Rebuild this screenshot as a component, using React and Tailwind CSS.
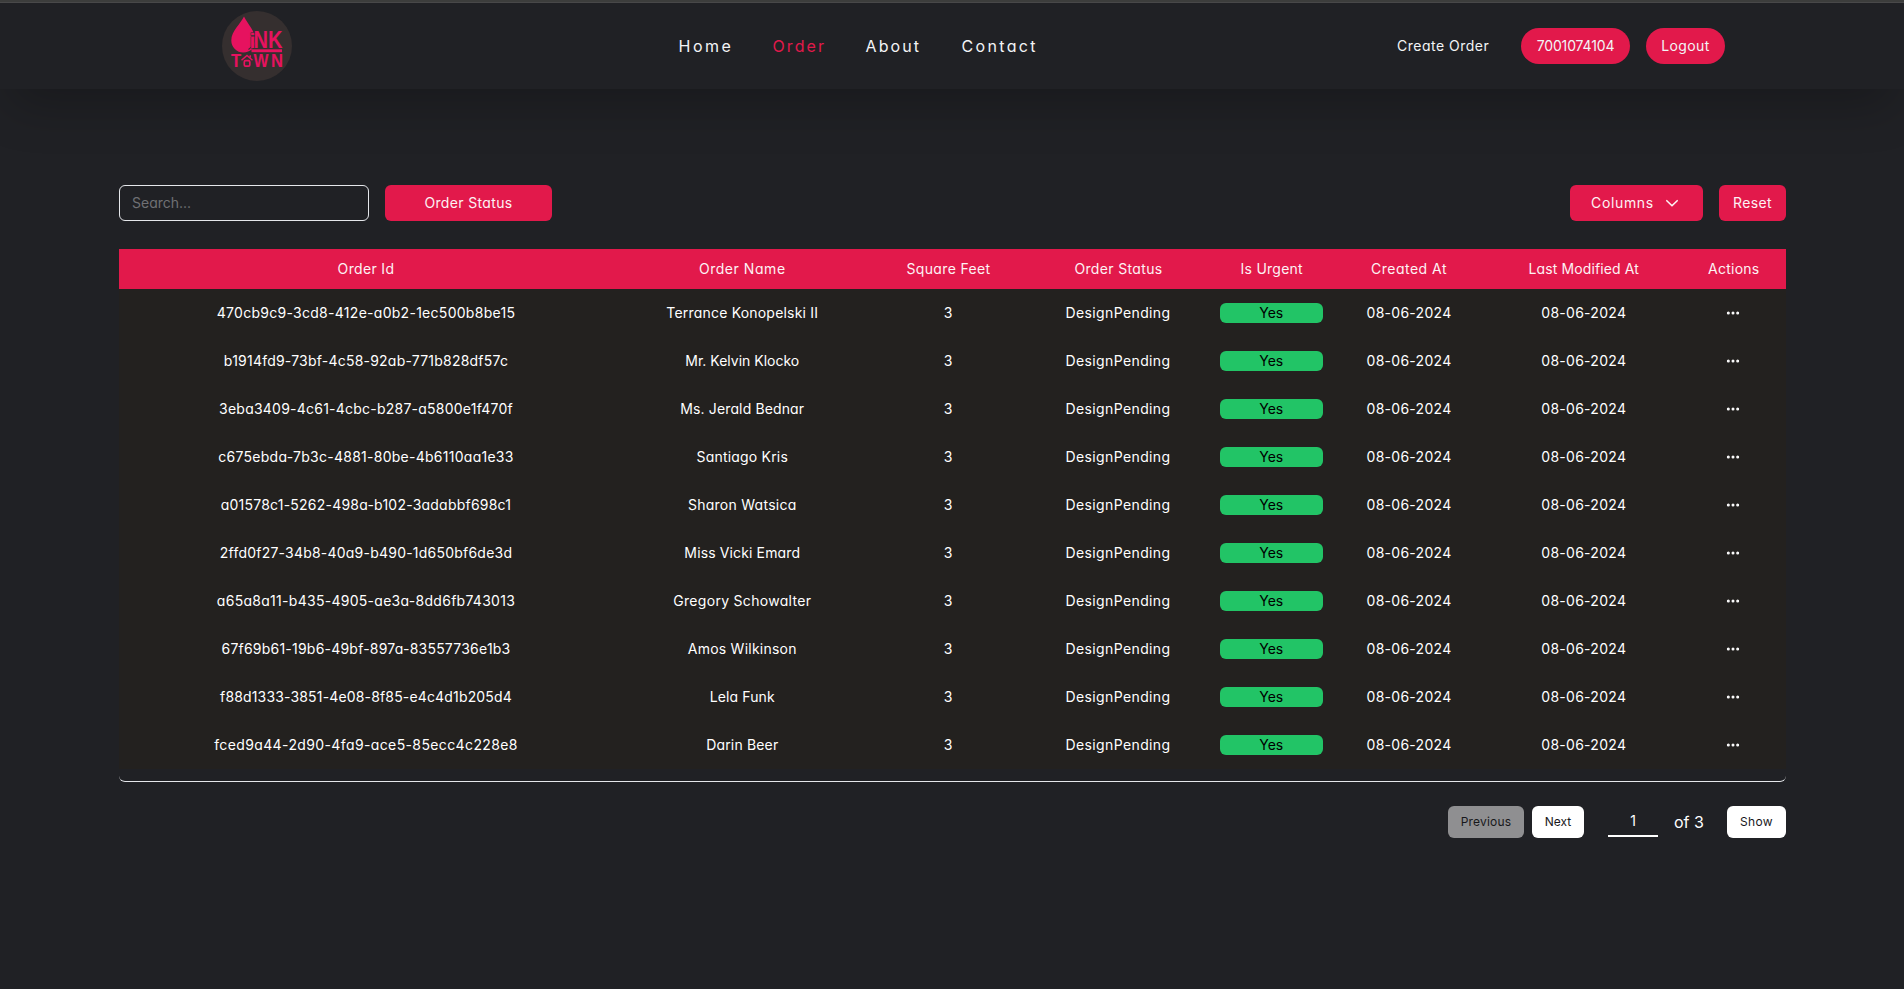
import React from "react";
import { Ellipsis } from "lucide-react";

const links = [
  { label: "Home", cls: "w-[53px] tracking-[2.5px]" },
  { label: "Order", cls: "w-[52px] tracking-[2.1px] text-[#e2194b]" },
  { label: "About", cls: "w-[55px] tracking-[2.1px]" },
  { label: "Contact", cls: "w-[78px] tracking-[2.35px]" },
];

const columns = [
  { label: "Order Id", cls: "tracking-[0.35px]" },
  { label: "Order Name", cls: "tracking-[0.55px]" },
  { label: "Square Feet", cls: "tracking-[0.35px]" },
  { label: "Order Status", cls: "tracking-[0.35px]" },
  { label: "Is Urgent", cls: "tracking-[0.25px]" },
  { label: "Created At", cls: "tracking-[0.5px]" },
  { label: "Last Modified At", cls: "tracking-[0.13px]" },
  { label: "Actions", cls: "tracking-[0.25px]" },
];

const orders = [
  { id: "470cb9c9-3cd8-412e-a0b2-1ec500b8be15", idCls: "tracking-[0.28px]", name: "Terrance Konopelski II", nameCls: "tracking-[0.2px]" },
  { id: "b1914fd9-73bf-4c58-92ab-771b828df57c", idCls: "tracking-[0.22px]", name: "Mr. Kelvin Klocko", nameCls: "tracking-normal" },
  { id: "3eba3409-4c61-4cbc-b287-a5800e1f470f", idCls: "tracking-[0.23px]", name: "Ms. Jerald Bednar", nameCls: "tracking-[0.13px]" },
  { id: "c675ebda-7b3c-4881-80be-4b6110aa1e33", idCls: "tracking-[0.26px]", name: "Santiago Kris", nameCls: "tracking-[0.2px]" },
  { id: "a01578c1-5262-498a-b102-3adabbf698c1", idCls: "tracking-[0.22px]", name: "Sharon Watsica", nameCls: "tracking-[0.26px]" },
  { id: "2ffd0f27-34b8-40a9-b490-1d650bf6de3d", idCls: "tracking-[0.22px]", name: "Miss Vicki Emard", nameCls: "tracking-[0.13px]" },
  { id: "a65a8a11-b435-4905-ae3a-8dd6fb743013", idCls: "tracking-[0.28px]", name: "Gregory Schowalter", nameCls: "tracking-[0.3px]" },
  { id: "67f69b61-19b6-49bf-897a-83557736e1b3", idCls: "tracking-[0.22px]", name: "Amos Wilkinson", nameCls: "tracking-[0.24px]" },
  { id: "f88d1333-3851-4e08-8f85-e4c4d1b205d4", idCls: "tracking-[0.16px]", name: "Lela Funk", nameCls: "tracking-[0.1px]" },
  { id: "fced9a44-2d90-4fa9-ace5-85ecc4c228e8", idCls: "tracking-[0.38px]", name: "Darin Beer", nameCls: "tracking-[0.16px]" },
];

const grid =
  "grid grid-cols-[493px_259.5px_153px_187px_119.5px_155px_194.5px_105.5px] items-center justify-items-center whitespace-nowrap";

function Logo() {
  return (
    <svg viewBox="0 0 70 70" className="size-[70px]" fill="#e6125f" fontFamily="'Liberation Sans', Arial, sans-serif" fontWeight="700">
      <circle cx="35" cy="35" r="35" fill="#352f2f" />
      <path d="M22 5.5C18.5 13 9.3 20 9.3 29.5a12 12 0 0 0 12 12c7 0 12.2-5 12.2-12C33.5 20 25.5 13 22 5.5z" />
      <path d="M32.500 24c1 6-1 11-6 14.500" fill="none" stroke="#352f2f" strokeWidth="1.1" />
      <text x="27.500" y="36.500" fontSize="21" stroke="#352f2f" strokeWidth="1.2" paintOrder="stroke">i</text>
      <text x="31.500" y="36.700" fontSize="23.500" textLength="29" lengthAdjust="spacingAndGlyphs">NK</text>
      <rect x="29.500" y="38.300" width="30.500" height="2.900" />
      <text x="9" y="55.700" fontSize="17.500" textLength="10.200" lengthAdjust="spacingAndGlyphs">T</text>
      <path d="M19.500 49.300 25 44.500l5.500 4.800M28.300 46.500V44.200" fill="none" stroke="#e6125f" strokeWidth="1.500" />
      <rect x="22.300" y="49.600" width="5.500" height="5.600" rx="1.300" fill="none" stroke="#e6125f" strokeWidth="1.700" />
      <text x="31.500" y="55.700" fontSize="17.500" textLength="15" lengthAdjust="spacingAndGlyphs">W</text>
      <text x="49" y="55.700" fontSize="17.500" textLength="12" lengthAdjust="spacingAndGlyphs">N</text>
    </svg>
  );
}

export default function App() {
  return (
    <div className="min-h-[989px] bg-[#202125] font-['Inter','Open_Sans',sans-serif] text-sm text-white [font-feature-settings:'cv11']">
      <div className="h-[3px] border-b border-[#4a4a4b] bg-[#3d3e3d]" />
      <header className="flex h-[86px] items-center bg-[#202125] pl-[222px] shadow-[0_25px_50px_-12px_rgba(0,0,0,0.25)]">
        <Logo />
        <nav className="ml-[386.5px] flex gap-[41px] pb-px text-base whitespace-nowrap text-[#f3f4f6]">
          {links.map((l) => (
            <a key={l.label} className={l.cls}>{l.label}</a>
          ))}
        </nav>
        <div className="ml-[357.5px] flex items-center text-[#f3f4f6]">
          <a className="w-[124px] tracking-[0.5px] whitespace-nowrap">Create Order</a>
          <button className="h-9 w-[109px] rounded-full bg-[#e2194b] tracking-[-0.15px]">7001074104</button>
          <button className="ml-4 h-9 w-[79px] rounded-full bg-[#e2194b] tracking-[0.4px]">Logout</button>
        </div>
      </header>

      <main className="ml-[119px] w-[1667px] pt-24">
        <div className="flex gap-4 text-[#fdf2f4]">
          <input
            placeholder="Search..."
            className="h-9 w-[250px] rounded-md border border-gray-200 bg-transparent px-3 pb-0.5 outline-none placeholder:text-[#6f7074]"
          />
          <button className="h-9 w-[167px] rounded-md bg-[#e2194b] tracking-[0.35px]">Order Status</button>
          <button className="ml-auto flex h-9 w-[133px] items-center gap-[11px] rounded-md bg-[#e2194b] pl-[21px] tracking-[0.65px]">
            Columns
            <svg width="14" height="14" viewBox="0 0 14 14" fill="none" stroke="currentColor" strokeWidth="1.6" strokeLinecap="round" strokeLinejoin="round">
              <path d="M1.8 4.7 7 9.8l5.200-5.100" />
            </svg>
          </button>
          <button className="h-9 w-[67px] rounded-md bg-[#e2194b] tracking-[0.35px]">Reset</button>
        </div>

        <div className="mt-7 h-[533px] rounded-b-md border-b border-[#e5e7eb]">
          <div className={`${grid} h-10 bg-[#e2194b] text-[#fdf2f4]`}>
            {columns.map((c) => (
              <div key={c.label} className={`pl-px ${c.cls}`}>{c.label}</div>
            ))}
          </div>
          <div className="bg-[#23211f]">
            {orders.map((o) => (
              <div key={o.id} className={`${grid} h-12`}>
                <div className={`pl-px ${o.idCls}`}>{o.id}</div>
                <div className={`pl-px ${o.nameCls}`}>{o.name}</div>
                <div>3</div>
                <div className="tracking-[0.38px]">DesignPending</div>
                <div className="h-5 w-[103px] rounded-md bg-[#22c466] text-center text-black">Yes</div>
                <div className="pl-px tracking-[0.28px]">08-06-2024</div>
                <div className="pl-px tracking-[0.28px]">08-06-2024</div>
                <Ellipsis className="size-4" strokeWidth={2.5} />
              </div>
            ))}
          </div>
        </div>

        <div className="mt-6 flex items-center justify-end text-xs text-[#18181b]">
          <button className="h-8 w-[76px] rounded-md bg-[#8f8f91] tracking-[0.2px]">Previous</button>
          <button className="ml-2 h-8 w-[52px] rounded-md bg-white">Next</button>
          <div className="mb-px ml-6 h-[31px] w-[50px] border-b-2 border-white text-center text-sm leading-[30px] text-white">1</div>
          <div className="ml-4 w-[53px] pb-px text-base text-white">of 3</div>
          <button className="h-8 w-[59px] rounded-md bg-white tracking-[0.3px]">Show</button>
        </div>
      </main>
    </div>
  );
}
